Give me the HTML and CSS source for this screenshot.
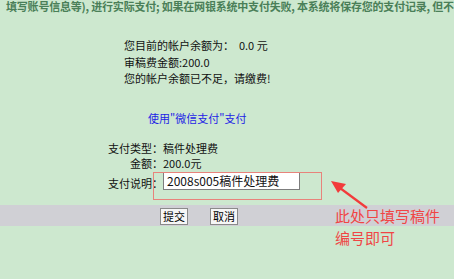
FILE: index.html
```html
<!DOCTYPE html>
<html lang="zh-CN">
<head>
    <meta charset="UTF-8">
    <title>支付</title>
    <link rel="stylesheet" href="styles.css">
</head>
<body>
    <div class="notice">填写账号信息等), 进行实际支付; 如果在网银系统中支付失败, 本系统将保存您的支付记录, 但不能保证您的稿件能及时处理</div>

    <div class="balance">
        <p>您目前的帐户余额为：&nbsp; 0.0 元</p>
        <p>审稿费金额:200.0</p>
        <p>您的帐户余额已不足，请缴费!</p>
    </div>

    <div class="wechat"><a href="#">使用"微信支付"支付</a></div>

    <div class="pay-form">
        <span class="label">支付类型：</span><span class="value">稿件处理费</span>
        <span class="label">金额：</span><span class="value">200.0元</span>
        <span class="label row3">支付说明：</span><span class="value row3"><input type="text" class="memo" value="2008s005稿件处理费"></span>
    </div>

    <div class="actions">
        <button class="btn">提交</button>
        <button class="btn">取消</button>
    </div>

    <!-- 标注 -->
    <div class="mark-box"></div>
    <svg class="mark-arrow" width="60" height="40" viewBox="0 0 60 40">
        <line x1="12" y1="9" x2="39" y2="29" stroke="#f23b3b" stroke-width="2.2"/>
        <polygon points="3,2 18,5 10,14" fill="#f23b3b"/>
    </svg>
    <div class="mark-text">此处只填写稿件<br>编号即可</div>
</body>
</html>
```

FILE: styles.css
```css
body {
    margin: 0;
    padding: 0;
    background-color: #cde8cf;
    font-family: "Noto Sans CJK SC", "DejaVu Sans", sans-serif;
    font-size: 11px;
    color: #111;
    position: relative;
    height: 279px;
    overflow: hidden;
}

.notice {
    height: 14px;
    line-height: 12px;
    padding-left: 6px;
    white-space: nowrap;
    overflow: hidden;
    color: #4a7f58;
    font-weight: bold;
    letter-spacing: -0.2px;
}

.balance {
    margin: 23px 0 0 124px;
}

.balance p {
    margin: 0;
    line-height: 16.5px;
}

.wechat {
    margin: 23px 0 0 148px;
    line-height: 16px;
}

.wechat a {
    color: #1e1ee6;
    text-decoration: none;
}

.pay-form {
    display: grid;
    grid-template-columns: 55px auto;
    grid-template-rows: 15px 16px 19px;
    margin: 15px 0 0 108px;
    line-height: 15px;
}

.label {
    text-align: right;
    white-space: nowrap;
}

.row3 {
    line-height: 22px;
}

.memo {
    box-sizing: border-box;
    width: 137px;
    height: 18px;
    margin: 0;
    padding: 0 3px;
    border: 1px solid #7d7d7d;
    background: #fff;
    font-family: "Noto Sans CJK SC", sans-serif;
    font-size: 12px;
    color: #111;
    vertical-align: top;
}

.actions {
    display: flex;
    gap: 22px;
    margin-top: 14px;
    height: 21px;
    background-color: #d0d0d5;
    padding-left: 160px;
    box-sizing: border-box;
    padding-top: 3px;
}

.btn {
    box-sizing: border-box;
    height: 17px;
    width: 28px;
    margin: 0;
    padding: 0;
    border: 1px solid #8a8a8a;
    background: #f6f6f6;
    font-family: "Noto Sans CJK SC", sans-serif;
    font-size: 11px;
    line-height: 14px;
    color: #000;
}

.mark-box {
    position: absolute;
    left: 153px;
    top: 172px;
    width: 169px;
    height: 28px;
    box-sizing: border-box;
    border: 1.5px solid #e8837b;
}

.mark-arrow {
    position: absolute;
    left: 328px;
    top: 179px;
}

.mark-text {
    position: absolute;
    left: 335px;
    top: 205px;
    font-size: 15px;
    line-height: 22px;
    color: #f04545;
}
```
